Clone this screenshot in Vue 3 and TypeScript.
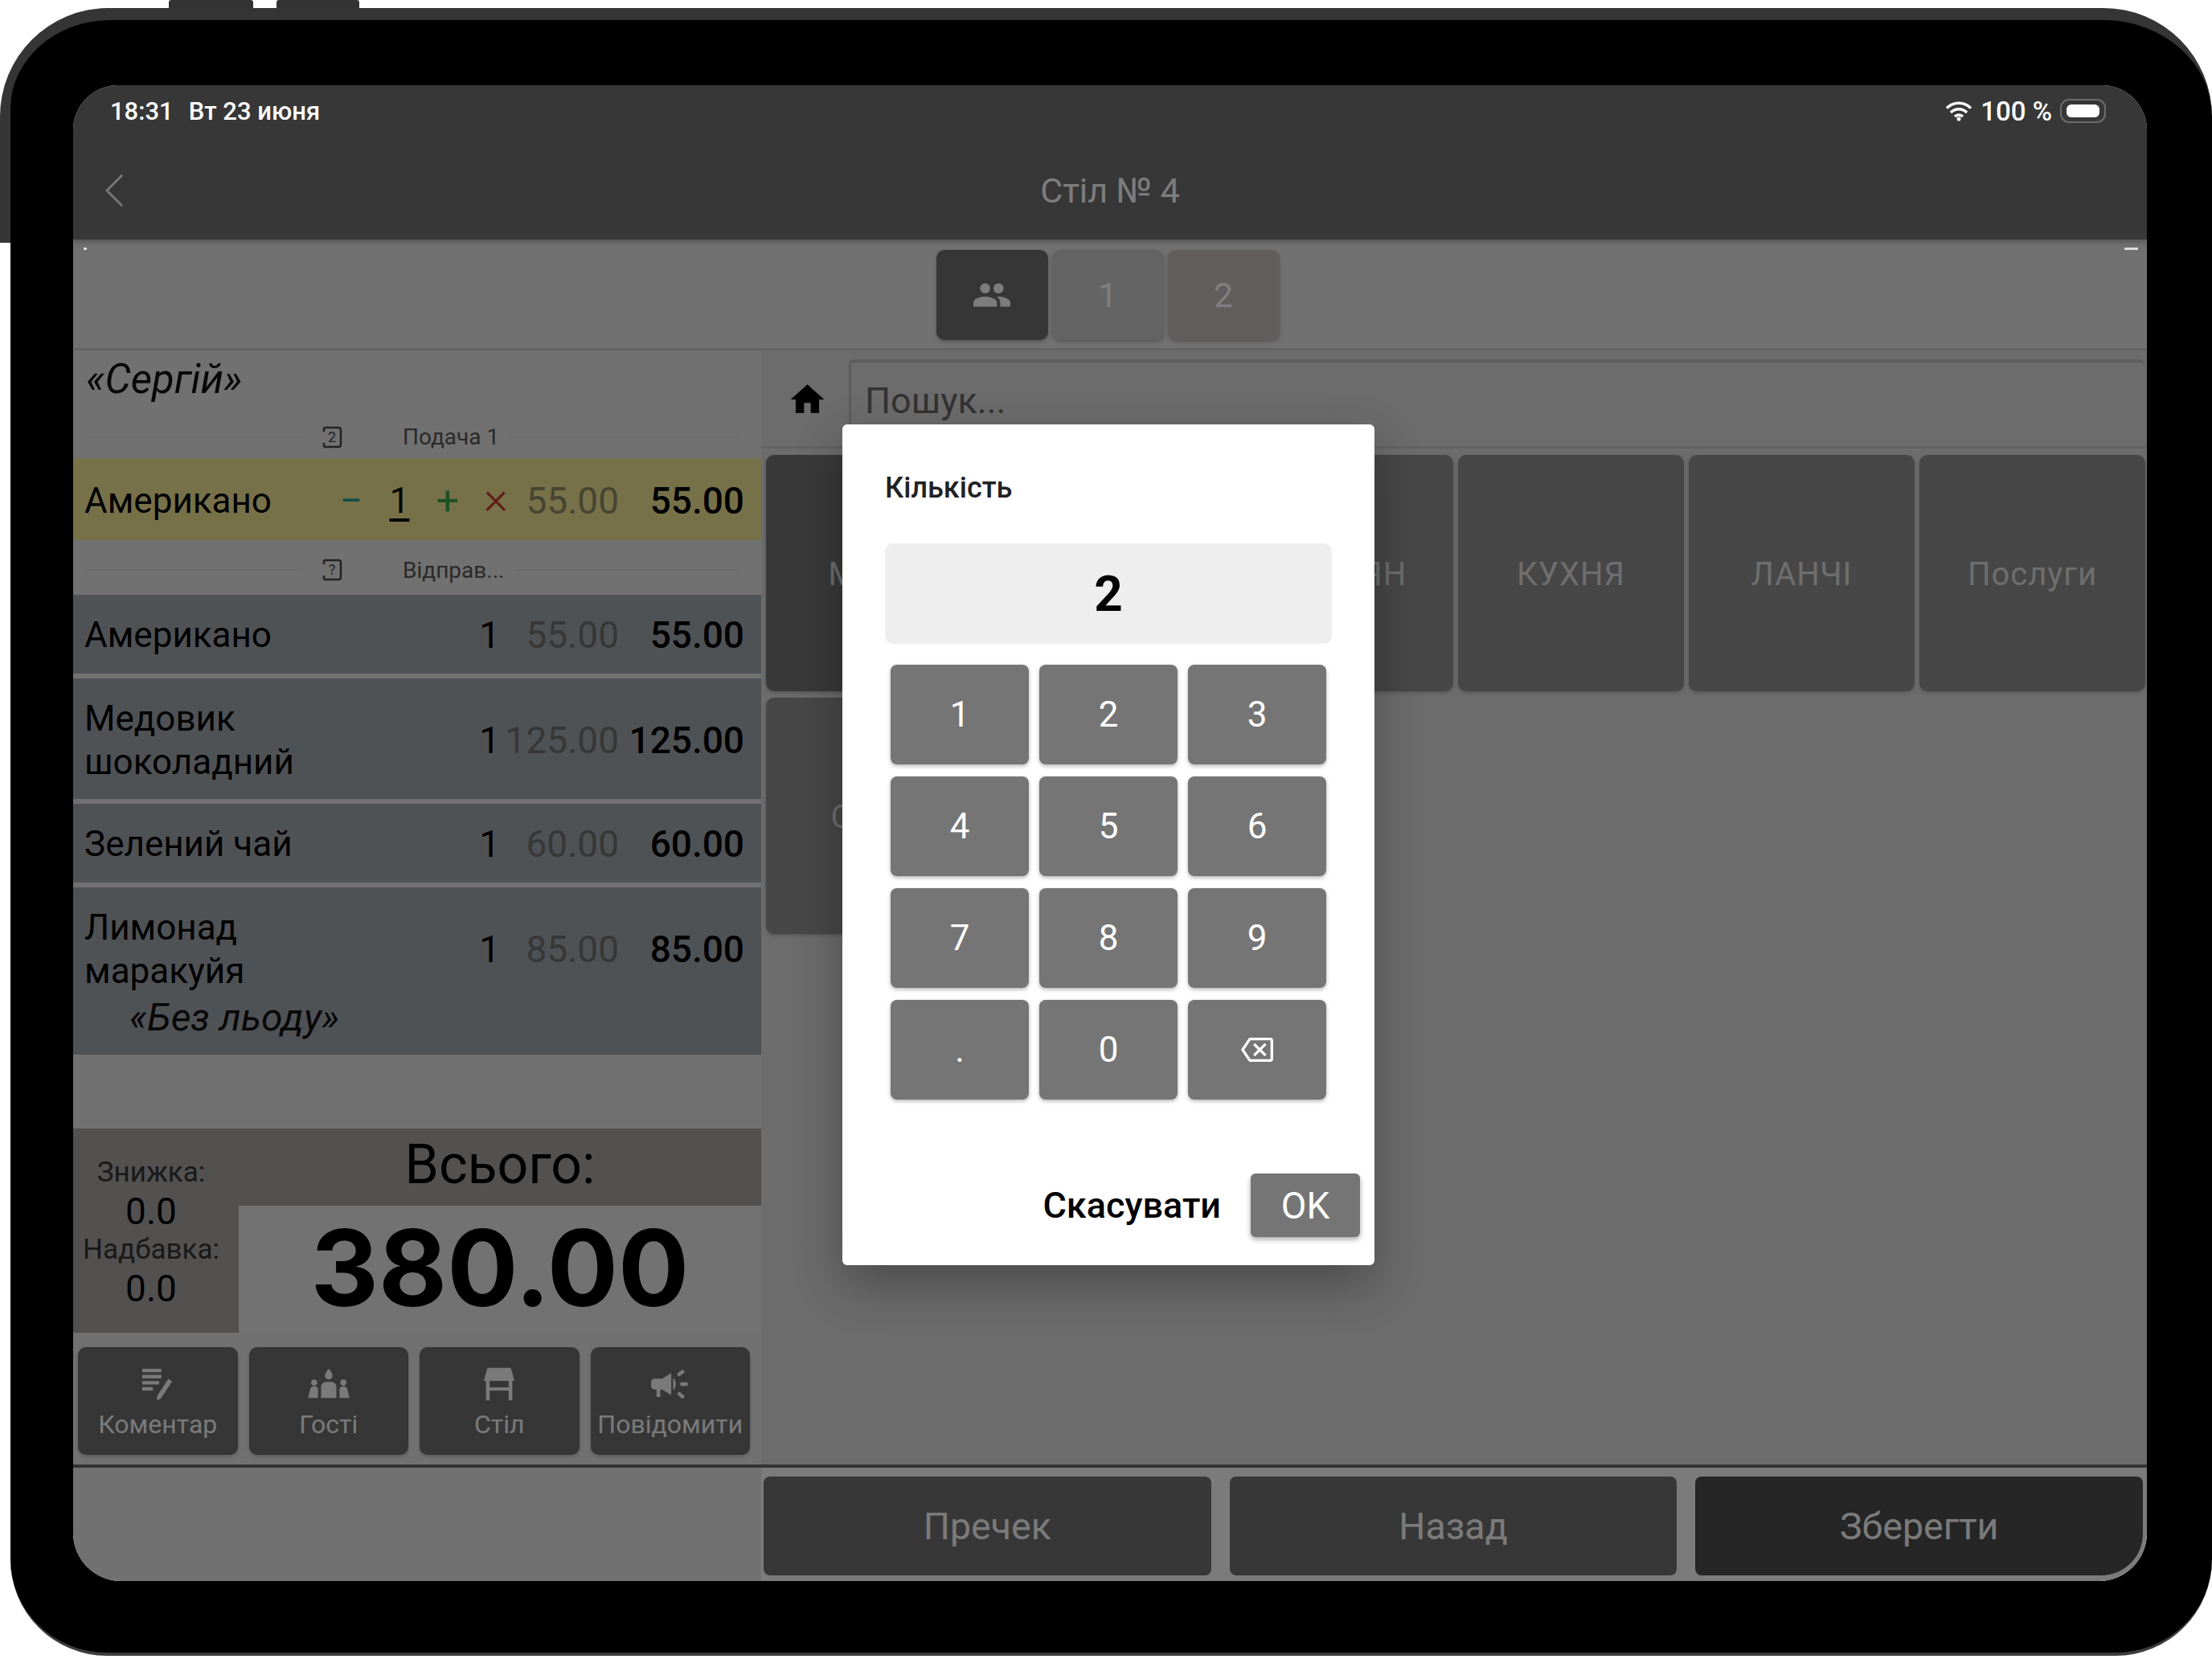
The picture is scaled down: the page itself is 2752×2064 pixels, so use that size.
<script setup lang="ts">
interface OrderRow {
  name: string[];
  qty: number;
  price: string;
  total: string;
  note?: string;
}

const sentRows: OrderRow[] = [
  { name: ["Американо"], qty: 1, price: "55.00", total: "55.00" },
  { name: ["Медовик", "шоколадний"], qty: 1, price: "125.00", total: "125.00" },
  { name: ["Зелений чай"], qty: 1, price: "60.00", total: "60.00" },
  { name: ["Лимонад", "маракуйя"], qty: 1, price: "85.00", total: "85.00", note: "«Без льоду»" },
];

// the second button sits entirely under the dialog, so it has no label here
const categories: string[] = ["МЕНЮ", "", "КАЛЬЯН", "КУХНЯ", "ЛАНЧІ", "Послуги", "Снеки"];
const keys: string[] = ["1", "2", "3", "4", "5", "6", "7", "8", "9", ".", "0"];
</script>

<template>
  <div class="stage">
    <i class="cam-btn cam-a"></i>
    <i class="cam-btn cam-b"></i>
    <div class="ear"></div>
    <div class="tablet">
      <div class="screen">
        <header class="navbar">
          <svg class="back" viewBox="0 0 24 42"><path d="M22 1 2 21l20 20" /></svg>
          <span class="nav-title">Стіл № 4</span>
        </header>

        <div class="tabs">
          <button class="tab tab-dark">
            <svg viewBox="0 0 24 24" width="50" height="50"><path fill="#fafafa" d="M16 11c1.66 0 2.99-1.34 2.99-3S17.66 5 16 5c-1.66 0-3 1.34-3 3s1.34 3 3 3zm-8 0c1.66 0 2.99-1.34 2.99-3S9.66 5 8 5C6.34 5 5 6.34 5 8s1.34 3 3 3zm0 2c-2.33 0-7 1.17-7 3.5V19h14v-2.5c0-2.33-4.67-3.5-7-3.5zm8 0c-.29 0-.62.02-.97.05 1.16.84 1.97 1.97 1.97 3.45V19h6v-2.5c0-2.33-4.67-3.5-7-3.5z" /></svg>
          </button>
          <button class="tab">1</button>
          <button class="tab tab-warm">2</button>
        </div>

        <div class="body">
          <section class="order">
            <div class="guest">«Сергій»</div>

            <div class="course course-first">
              <span class="course-line short"></span>
              <svg class="course-icon" viewBox="0 0 26 28"><path d="M3 2h18q3 0 3 3v18q0 3-3 3H3M3 2v5M3 26v-5" /><text x="13" y="20" text-anchor="middle">2</text></svg>
              <span class="course-label">Подача 1</span>
              <span class="course-line"></span>
            </div>
            <div class="row row-active">
              <span class="row-name">Американо</span>
              <span class="ctl ctl-minus">−</span>
              <span class="ctl ctl-qty">1</span>
              <span class="ctl ctl-plus">+</span>
              <span class="ctl ctl-del">×</span>
              <span class="cell-price narrow">55.00</span>
              <span class="cell-total">55.00</span>
            </div>

            <div class="course course-second">
              <span class="course-line short"></span>
              <svg class="course-icon" viewBox="0 0 26 28"><path d="M3 2h18q3 0 3 3v18q0 3-3 3H3M3 2v5M3 26v-5" /><text x="13" y="20" text-anchor="middle">?</text></svg>
              <span class="course-label">Відправ...</span>
              <span class="course-line"></span>
            </div>
            <div class="sent">
              <div v-for="row in sentRows" :key="row.total" class="sent-row">
                <div class="row">
                  <span class="row-name">
                    <span v-for="line in row.name" :key="line" class="name-line">{{ line }}</span>
                  </span>
                  <span class="cell-qty">{{ row.qty }}</span>
                  <span class="cell-price">{{ row.price }}</span>
                  <span class="cell-total">{{ row.total }}</span>
                </div>
                <div v-if="row.note" class="row-note">{{ row.note }}</div>
              </div>
            </div>

            <div class="spacer"></div>

            <div class="totals">
              <div class="adjust">
                <span class="adjust-label">Знижка:</span>
                <span class="adjust-value">0.0</span>
                <span class="adjust-label">Надбавка:</span>
                <span class="adjust-value">0.0</span>
              </div>
              <div class="sum">
                <div class="sum-title">Всього:</div>
                <div class="sum-value">380.00</div>
              </div>
            </div>

            <div class="tools">
              <button class="tool">
                <svg viewBox="0 0 44 44" width="42" height="42" fill="#f4f4f4">
                  <rect x="2" y="2" width="25" height="4.5" />
                  <rect x="2" y="10" width="25" height="4.5" />
                  <rect x="2" y="18" width="22" height="4.5" />
                  <rect x="2" y="26" width="14" height="4.5" />
                  <path d="M36 15l5 3.5L26 41l-5 2 .6-5.5z" />
                </svg>
                <span>Коментар</span>
              </button>
              <button class="tool">
                <svg viewBox="0 0 56 44" width="54" height="42" fill="#f4f4f4">
                  <path d="M28 2c3 3.500 5 6 5 9a5 5 0 0 1-10 0c0-3 2-5.500 5-9z" />
                  <path d="M18 40V26q0-7 7-7h6q7 0 7 7v14z" />
                  <circle cx="9" cy="20" r="4" /><circle cx="47" cy="20" r="4" />
                  <path d="M1 40l3-12q1-3 5-3t5 3v12zM42 40V28q1-3 5-3t5 3l3 12z" />
                </svg>
                <span>Гості</span>
              </button>
              <button class="tool">
                <svg viewBox="0 0 44 52" width="40" height="42" preserveAspectRatio="none" fill="#f4f4f4">
                  <path d="M6 1h32l5 20H1z" />
                  <rect x="4" y="21" width="5" height="30" />
                  <rect x="35" y="21" width="5" height="30" />
                  <rect x="8" y="31" width="28" height="5" />
                </svg>
                <span>Стіл</span>
              </button>
              <button class="tool">
                <svg viewBox="2 3 21 18" width="48" height="42"><path fill="#f4f4f4" d="M18 11v2h4v-2h-4zm-2 6.610c.96.71 2.210 1.650 3.200 2.390.4-.53.8-1.070 1.200-1.600-.99-.74-2.240-1.680-3.200-2.400-.4.54-.8 1.080-1.200 1.610zM20.400 5.600c-.4-.53-.8-1.070-1.200-1.600-.99.74-2.240 1.680-3.200 2.400.4.53.8 1.070 1.200 1.600.96-.72 2.210-1.650 3.200-2.400zM4 9c-1.100 0-2 .9-2 2v2c0 1.100.9 2 2 2h1v4h2v-4h1l5 3V6L8 9H4zm11.500 3c0-1.330-.58-2.530-1.500-3.350v6.690c.92-.81 1.500-2.010 1.500-3.340z" /></svg>
                <span>Повідомити</span>
              </button>
            </div>
          </section>

          <section class="catalog">
            <div class="search-row">
              <svg class="home" viewBox="0 0 24 24"><path d="M10 20v-6h4v6h5v-8h3L12 3 2 12h3v8z" /></svg>
              <div class="search">Пошук...</div>
            </div>
            <div class="cats">
              <button v-for="(cat, i) in categories" :key="i" class="cat" :class="{ 'cat-on': i === 0 }">{{ cat }}</button>
            </div>
          </section>
        </div>

        <footer class="footer">
          <div class="footer-left"></div>
          <div class="footer-actions">
            <button class="action">Пречек</button>
            <button class="action">Назад</button>
            <button class="action action-save">Зберегти</button>
          </div>
        </footer>

        <div class="scrim"></div>
        <i class="speck speck-left"></i>
        <i class="speck speck-right"></i>

        <div class="status">
          <span class="status-time">18:31</span>
          <span class="status-date">Вт 23 июня</span>
          <svg class="wifi" viewBox="0 0 34 26">
            <path d="M2 9.500a21 21 0 0 1 30 0M7 15a14 14 0 0 1 20 0M12 20a7 7 0 0 1 10 0" />
            <circle cx="17" cy="23" r="2.500" />
          </svg>
          <span class="status-batt">100 %</span>
          <span class="battery"><i></i></span>
        </div>

        <div class="dialog">
          <div class="dialog-title">Кількість</div>
          <div class="display">2</div>
          <div class="keypad">
            <button v-for="k in keys" :key="k" class="key">{{ k }}</button>
            <button class="key">
              <svg viewBox="0 0 24 24" width="40" height="40"><path fill="#fff" d="M22 3H7c-.69 0-1.230.35-1.590.88L0 12l5.410 8.110c.36.53.9.89 1.590.89h15c1.100 0 2-.9 2-2V5c0-1.100-.9-2-2-2zm0 16H7.070L2.400 12l4.660-7H22v14zm-11.590-2L14 13.410 17.590 17 19 15.590 15.410 12 19 8.410 17.590 7 14 10.590 10.410 7 9 8.410 12.590 12 9 15.590z" /></svg>
            </button>
          </div>
          <div class="dialog-actions">
            <span class="cancel">Скасувати</span>
            <button class="ok">OK</button>
          </div>
        </div>
      </div>
    </div>
  </div>
</template>

<style>
html, body {
  margin: 0;
  background: #fff;
}
</style>

<style scoped>
.stage {
  position: relative;
  width: 2752px;
  height: 2064px;
  overflow: hidden;
  background: #fff;
  font-family: Roboto, "Noto Sans", sans-serif;
}

button {
  border: 0;
  padding: 0;
  font-family: inherit;
}

.cam-btn {
  position: absolute;
  top: 0;
  height: 10px;
  background: #333;
  border-radius: 3px 3px 0 0;
}

.cam-a {
  left: 210px;
  width: 105px;
}

.cam-b {
  left: 344px;
  width: 103px;
}

.ear {
  position: absolute;
  left: 0;
  top: 10px;
  width: 260px;
  height: 292px;
  box-sizing: border-box;
  background: #000;
  border-left: 14px solid #353535;
  border-top: 15px solid #353535;
  border-top-left-radius: 135px;
}

.tablet {
  position: absolute;
  left: 13px;
  top: 10px;
  width: 2739px;
  height: 2050px;
  box-sizing: border-box;
  padding: 81px 0 0 78px;
  background: #000;
  border-top: 15px solid #353535;
  border-bottom: 4px solid #3c3c3c;
  border-radius: 125px 135px 120px 120px;
}

.screen {
  position: relative;
  width: 2580px;
  height: 1861px;
  display: flex;
  flex-direction: column;
  overflow: hidden;
  background: #e2e2e2;
  border-radius: 56px 56px 60px 60px;
}

.navbar {
  flex: 0 0 192px;
  box-sizing: border-box;
  display: flex;
  align-items: center;
  justify-content: center;
  position: relative;
  padding-top: 70px;
  background: #6e6e6e;
  box-shadow: 0 3px 6px rgba(0, 0, 0, 0.25);
  z-index: 1;
}

.back {
  position: absolute;
  left: 40px;
  top: 110px;
  width: 23px;
  height: 42px;
  fill: none;
  stroke: #f0f0f0;
  stroke-width: 3;
}

.nav-title {
  font-size: 43px;
  color: #fafafa;
}

.tabs {
  flex: 0 0 138px;
  box-sizing: border-box;
  display: flex;
  justify-content: center;
  gap: 5px;
  padding: 13px 6px 0 0;
  border-bottom: 3px solid #c8c8c8;
}

.tab {
  width: 139px;
  height: 112px;
  display: flex;
  align-items: center;
  justify-content: center;
  border-radius: 10px;
  background: #c8c8c8;
  color: #fff;
  font-size: 42px;
  box-shadow: 0 2px 4px rgba(0, 0, 0, 0.25);
}

.tab-dark {
  background: #6c6c6c;
}

.tab-warm {
  background: #c2bdbb;
}

.body {
  flex: 1;
  min-height: 0;
  display: flex;
}

.order {
  flex: 0 0 856px;
  display: flex;
  flex-direction: column;
}

.guest {
  height: 84px;
  box-sizing: border-box;
  padding: 8px 0 0 16px;
  font-size: 51px;
  font-style: italic;
  line-height: 56px;
  color: #111;
}

.course {
  display: flex;
  align-items: center;
  box-sizing: border-box;
  padding-left: 16px;
  padding-right: 28px;
  font-size: 28px;
  color: #555;
}

.course-first {
  height: 50px;
  padding-bottom: 3px;
}

.course-second {
  height: 68px;
  padding-top: 6px;
}

.course-line {
  flex: 1;
  height: 2px;
  background: #d6d6d6;
}

.course-line.short {
  flex: 0 0 270px;
}

.course-icon {
  width: 26px;
  height: 28px;
  margin: 0 0 0 23px;
  fill: none;
  stroke: #444;
  stroke-width: 2.500;
}

.course-icon text {
  fill: #444;
  stroke: none;
  font-size: 18px;
  font-family: Roboto, sans-serif;
}

.course-label {
  margin: 0 14px 0 75px;
}

.row {
  display: flex;
  align-items: center;
  padding: 0 21px 0 14px;
  font-size: 44px;
  line-height: 54px;
  color: #000;
}

.row-active {
  height: 102px;
  background: #eee294;
  padding-top: 3px;
  box-sizing: border-box;
}

.row-name {
  flex: 1;
  min-width: 0;
}

.name-line {
  display: block;
}

.ctl {
  width: 60px;
  text-align: center;
}

.ctl-minus {
  color: #2a9d8f;
  font-size: 50px;
}

.ctl-qty {
  text-decoration: underline;
  text-underline-offset: 7px;
}

.ctl-plus {
  color: #3da34a;
  font-size: 50px;
}

.ctl-del {
  color: #c43a2a;
  font-size: 58px;
  font-weight: 300;
  padding-bottom: 8px;
}

.cell-qty {
  width: 32px;
  text-align: right;
  font-size: 46px;
}

.cell-price {
  width: 148px;
  text-align: right;
  color: #6e6e6e;
  font-size: 46px;
}

.cell-price.narrow {
  width: 123px;
  color: #8f8a60;
}

.cell-total {
  width: 156px;
  text-align: right;
  font-size: 46px;
  font-weight: 500;
}

.sent {
  display: flex;
  flex-direction: column;
  gap: 6px;
}

.sent-row {
  min-height: 98px;
  box-sizing: border-box;
  padding: 23px 0 19px;
  background: #9ea4aa;
}

.row-note {
  padding: 4px 0 0 70px;
  font-size: 48px;
  font-style: italic;
  line-height: 54px;
  color: #111;
}

.spacer {
  flex: 1;
}

.totals {
  flex: 0 0 254px;
  display: flex;
  background: #a4a2a0;
}

.adjust {
  flex: 0 0 206px;
  display: flex;
  flex-direction: column;
  align-items: center;
  padding: 33px 12px 0 0;
  box-sizing: border-box;
}

.adjust-label {
  height: 44px;
  line-height: 44px;
  font-size: 35px;
  color: #333;
}

.adjust-value {
  height: 52px;
  line-height: 52px;
  font-size: 46px;
  color: #000;
}

.sum {
  flex: 1;
  display: flex;
  flex-direction: column;
}

.sum-title {
  height: 93px;
  line-height: 90px;
  text-align: center;
  font-size: 68px;
  color: #000;
}

.sum-value {
  flex: 1;
  margin-top: 3px;
  background: #e4e4e4;
  text-align: center;
  font-family: Inter, Roboto, sans-serif;
  font-size: 131px;
  line-height: 156px;
  font-weight: 700;
  color: #000;
}

.tools {
  display: flex;
  gap: 14px;
  padding: 18px 0 0 6px;
  height: 164px;
  box-sizing: border-box;
}

.tool {
  width: 198.5px;
  height: 134px;
  display: flex;
  flex-direction: column;
  align-items: center;
  justify-content: flex-end;
  gap: 10px;
  padding-bottom: 19px;
  box-sizing: border-box;
  background: #6c6c6c;
  border-radius: 10px;
  color: #f4f4f4;
  font-size: 32px;
  box-shadow: 0 2px 4px rgba(0, 0, 0, 0.2);
}

.catalog {
  flex: 1;
  min-width: 0;
  display: flex;
  flex-direction: column;
  background: #d8d8d8;
}

.search-row {
  display: flex;
  height: 122px;
  padding: 11px 3px 0 0;
  box-sizing: border-box;
  border-bottom: 3px solid #c6c6c6;
}

.home {
  flex: 0 0 109px;
  width: 50px;
  height: 50px;
  margin-top: 25px;
  padding-left: 3px;
  box-sizing: content-box;
  fill: #000;
}

.search {
  flex: 1;
  height: 100px;
  box-sizing: border-box;
  padding: 21px 0 0 17px;
  margin-left: -3px;
  font-size: 45px;
  line-height: 54px;
  color: #666;
  border-top: 4px solid #bbb;
  border-left: 3px solid #bbb;
  border-radius: 6px 6px 0 0;
}

.cats {
  display: grid;
  grid-template-columns: repeat(6, 281px);
  grid-auto-rows: 294px;
  gap: 8px 6px;
  padding: 8px 0 0 6px;
}

.cat {
  padding-top: 2px;
  border-radius: 10px;
  background: #8e8e8e;
  color: #dcdcdc;
  font-size: 40px;
  letter-spacing: 1px;
  box-shadow: 0 2px 4px rgba(0, 0, 0, 0.2);
}

.cat-on {
  background: #727272;
}

.footer {
  flex: 0 0 145px;
  box-sizing: border-box;
  display: flex;
  border-top: 4px solid #666;
}

.footer-left {
  flex: 0 0 856px;
  background: #e2e2e2;
}

.footer-actions {
  flex: 1;
  display: flex;
  gap: 23px;
  padding: 11px 5px 7px 3px;
  background: #f6f6f6;
}

.action {
  flex: 1;
  border-radius: 8px;
  background: #6e6e6e;
  color: #f6f6f6;
  font-size: 46.5px;
}

.action-save {
  background: #4c4c4c;
  border-bottom-right-radius: 52px;
}

.scrim {
  position: absolute;
  inset: 0;
  z-index: 2;
  background: rgba(0, 0, 0, 0.5);
}

.speck {
  position: absolute;
  top: 202px;
  height: 3px;
  z-index: 3;
  background: #ddd;
}

.speck-left {
  left: 13px;
  width: 4px;
}

.speck-right {
  left: 2552px;
  width: 17px;
}

.status {
  position: absolute;
  left: 46px;
  right: 51px;
  top: 14px;
  z-index: 3;
  display: flex;
  align-items: center;
  height: 36px;
  font-size: 31px;
  font-weight: 500;
  color: #fff;
}

.status-date {
  flex: 1;
  margin-left: 19px;
}

.status-batt {
  font-size: 33px;
}

.wifi {
  width: 34px;
  height: 26px;
  margin-right: 10px;
  fill: #fff;
  stroke: #fff;
}

.wifi path {
  fill: none;
  stroke-width: 3.500;
}

.wifi circle {
  stroke: none;
}

.battery {
  position: relative;
  width: 57px;
  height: 30px;
  margin-left: 10px;
  box-sizing: border-box;
  padding: 5px 6px;
  border: 2px solid #6d6d6d;
  border-radius: 11px;
}

.battery i {
  display: block;
  height: 100%;
  background: #fff;
  border-radius: 6px;
}

.dialog {
  position: absolute;
  left: 957px;
  top: 422px;
  width: 662px;
  height: 1046px;
  box-sizing: border-box;
  z-index: 4;
  display: flex;
  flex-direction: column;
  background: #fff;
  border-radius: 6px;
  box-shadow: 0 24px 60px rgba(0, 0, 0, 0.3);
}

.dialog-title {
  height: 148px;
  box-sizing: border-box;
  padding: 57px 0 0 53px;
  font-size: 36px;
  line-height: 44px;
  font-weight: 500;
  color: #222;
}

.display {
  height: 125px;
  margin: 0 53px;
  background: #eee;
  border-radius: 10px;
  text-align: center;
  font-size: 62px;
  line-height: 125px;
  font-weight: 700;
  color: #000;
}

.keypad {
  display: grid;
  grid-template-columns: repeat(3, 172px);
  grid-auto-rows: 124px;
  gap: 15px 13px;
  margin: 26px 0 0 60px;
}

.key {
  display: flex;
  align-items: center;
  justify-content: center;
  background: #757575;
  border-radius: 8px;
  color: #fff;
  font-size: 44px;
  box-shadow: 0 2px 5px rgba(0, 0, 0, 0.3);
}

.dialog-actions {
  display: flex;
  align-items: center;
  justify-content: flex-end;
  gap: 37px;
  margin-top: 92px;
  padding-right: 18px;
}

.cancel {
  font-size: 45px;
  font-weight: 500;
  color: #000;
}

.ok {
  width: 136px;
  height: 79px;
  background: #757575;
  border-radius: 6px;
  color: #fff;
  font-size: 46px;
  box-shadow: 0 3px 6px rgba(0, 0, 0, 0.35);
}
</style>
